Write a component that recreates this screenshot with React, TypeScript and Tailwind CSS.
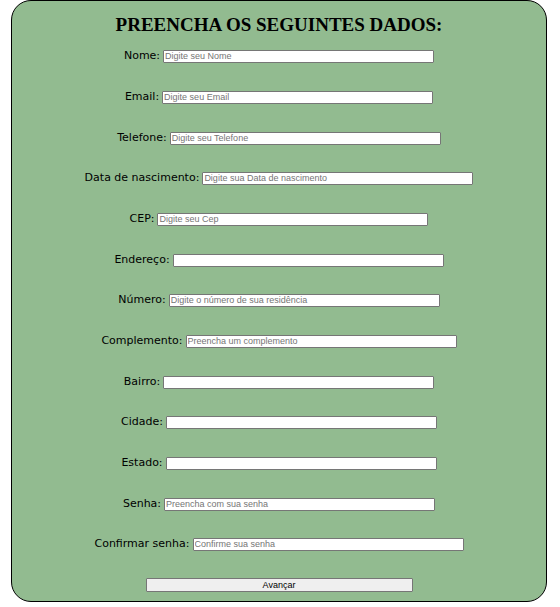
type Field = { id: string; label: string; placeholder?: string; type: string };

const groups: Field[][] = [
  [
    { id: "nome", label: "Nome:", placeholder: "Digite seu Nome", type: "text" },
    { id: "email", label: "Email:", placeholder: "Digite seu Email", type: "email" },
    { id: "telefone", label: "Telefone:", placeholder: "Digite seu Telefone", type: "tel" },
  ],
  [
    { id: "nascimento", label: "Data de nascimento:", placeholder: "Digite sua Data de nascimento", type: "text" },
    { id: "cep", label: "CEP:", placeholder: "Digite seu Cep", type: "text" },
    { id: "endereco", label: "Endereço:", type: "text" },
  ],
  [
    { id: "numero", label: "Número:", placeholder: "Digite o número de sua residência", type: "text" },
    { id: "complemento", label: "Complemento:", placeholder: "Preencha um complemento", type: "text" },
    { id: "bairro", label: "Bairro:", type: "text" },
  ],
  [
    { id: "cidade", label: "Cidade:", type: "text" },
    { id: "estado", label: "Estado:", type: "text" },
    { id: "senha", label: "Senha:", placeholder: "Preencha com sua senha", type: "password" },
  ],
  [{ id: "confirmar", label: "Confirmar senha:", placeholder: "Confirme sua senha", type: "password" }],
];

function FieldRow({ id, label, placeholder, type }: Field) {
  return (
    <div className="flex h-[14px] items-center justify-center gap-[3px]">
      <label
        htmlFor={id}
        className="font-['DejaVu_Sans',sans-serif] text-[11px] leading-[14px] whitespace-nowrap text-black"
      >
        {label}
      </label>
      <input
        id={id}
        type={type}
        placeholder={placeholder}
        className="h-[13px] w-[271px] rounded-[1px] border border-[#767676] bg-white px-px font-['Liberation_Sans',sans-serif] text-[9px] leading-[11px] placeholder:text-[#757575]"
      />
    </div>
  );
}

export default function App() {
  return (
    <main className="bg-white pr-[13px] pl-[11px]">
      <form className="flex flex-col items-center rounded-[20px] border border-black bg-[#92bb90] pt-3 pb-[9px]">
        <h1 className="font-['Liberation_Serif',serif] text-[19px] leading-6 font-bold text-black">
          PREENCHA OS SEGUINTES DADOS:
        </h1>
        <div className="mt-3 flex w-full flex-col gap-[26px]">
          {groups.map((group) => (
            <div key={group[0].id} className="flex flex-col gap-[27px]">
              {group.map((field) => (
                <FieldRow key={field.id} {...field} />
              ))}
            </div>
          ))}
        </div>
        <button
          type="submit"
          className="mt-[27px] h-[14px] w-1/2 rounded-[1px] border border-[#767676] bg-[#efefef] font-['Liberation_Sans',sans-serif] text-[9px] leading-3 text-black"
        >
          Avançar
        </button>
      </form>
    </main>
  );
}
